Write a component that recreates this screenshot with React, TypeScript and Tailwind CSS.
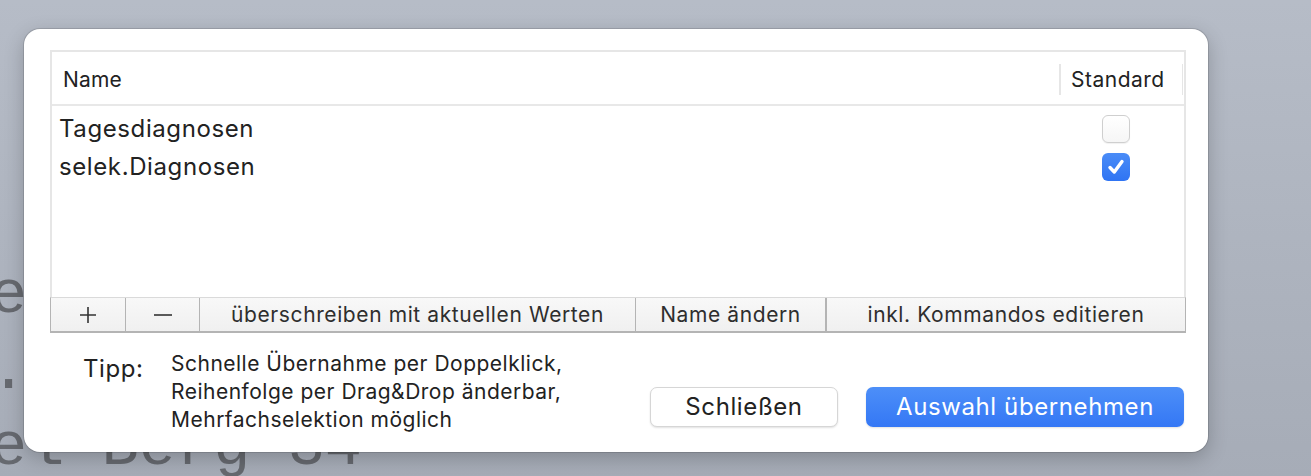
import React from "react";

const font = { fontFamily: "Inter, 'Noto Sans', sans-serif" };

function Checkbox({ checked }: { checked: boolean }) {
  if (checked) {
    return (
      <div className="flex h-[28px] w-[28px] items-center justify-center rounded-[6px] bg-gradient-to-b from-[#4a8cf7] to-[#2f74f3]">
        <svg width="20" height="20" viewBox="0 0 20 20">
          <path d="M4 10.5 L8.3 15 L16 4.5" fill="none" stroke="white" strokeWidth="3.4" strokeLinecap="round" strokeLinejoin="round" />
        </svg>
      </div>
    );
  }
  return (
    <div className="h-[28px] w-[28px] rounded-[6px] border border-[#cfcfcf] bg-gradient-to-b from-white to-[#f6f6f6] shadow-[0_1px_1px_rgba(0,0,0,0.06)]" />
  );
}

export default function App() {
  return (
    <div className="relative h-[476px] w-[1311px] overflow-hidden bg-gradient-to-b from-[#b6bcc7] to-[#a6acb7]" style={font}>
      <div
        className="-ml-[10px] pt-[258px] text-[62px] leading-[76px] text-[#66696f] whitespace-pre"
        style={{ fontFamily: "'Liberation Mono', monospace" }}
      >
        <div>e</div>
        <div>.</div>
        <div>el Berg 34</div>
      </div>

      <div className="absolute left-[24px] top-[29px] flex h-[423px] w-[1184px] flex-col rounded-[16px] bg-white pl-[26px] pr-[22px] pt-[21px] shadow-[0_0_0_1px_rgba(0,0,0,0.12),0_6px_20px_rgba(0,0,0,0.22)]">
        {/* table */}
        <div className="flex h-[283px] shrink-0 flex-col">
          <div className="flex flex-1 flex-col border-2 border-b-0 border-[#e6e6e6]">
            <div className="flex h-[54px] shrink-0 items-center border-b-2 border-[#e8e8e8] pt-[3px] text-[21px] text-[#222]">
              <div className="flex-1 pl-[11px] tracking-[0.2px]">Name</div>
              <div className="h-[31px] w-[2px] bg-[#e6e6e6]" />
              <div className="w-[121px] pl-[10px] tracking-[0.5px]">Standard</div>
              <div className="h-[31px] w-[1px] bg-[#e6e6e6]" />
              <div className="w-[1px]" />
            </div>
            <div className="flex flex-col pt-[4px] text-[24px] tracking-[0.6px] text-[#222]">
              <div className="flex h-[38px] items-center">
                <div className="flex-1 pl-[7px]">Tagesdiagnosen</div>
                <div className="mr-[54px]">
                  <Checkbox checked={false} />
                </div>
              </div>
              <div className="flex h-[38px] items-center">
                <div className="flex-1 pl-[7px]">selek.Diagnosen</div>
                <div className="mr-[54px]">
                  <Checkbox checked={true} />
                </div>
              </div>
            </div>
          </div>
          <div className="flex h-[36px] shrink-0 border border-b-2 border-[#b4b4b4] border-t-[#dadada] bg-gradient-to-b from-[#f8f8f8] to-[#f0f0f0] text-[21px] tracking-[0.6px] text-[#2e2e2e]">
            <div className="flex w-[74px] items-center justify-center">
              <svg width="18" height="18" viewBox="0 0 18 18">
                <path d="M9 1 V17 M1 9 H17" stroke="#333" strokeWidth="1.6" />
              </svg>
            </div>
            <div className="flex w-[74px] items-center justify-center border-l border-[#b4b4b4]">
              <svg width="20" height="18" viewBox="0 0 20 18">
                <path d="M1 9 H19" stroke="#333" strokeWidth="1.6" />
              </svg>
            </div>
            <div className="flex w-[436px] items-center justify-center border-l border-[#b4b4b4]">überschreiben mit aktuellen Werten</div>
            <div className="flex w-[190px] items-center justify-center border-l border-[#b4b4b4]">Name ändern</div>
            <div className="flex flex-1 items-center justify-center border-l-2 border-[#b4b4b4]">inkl. Kommandos editieren</div>
          </div>
        </div>

        {/* bottom */}
        <div className="flex min-h-0 flex-1 items-start pl-[33px] pr-[2px] pt-[17px]">
          <div className="w-[88px] shrink-0 pt-[5px] text-[24px] leading-[28px] tracking-[0.6px] text-[#222]">Tipp:</div>
          <div className="shrink-0 text-[21px] leading-[28px] tracking-[0.5px] text-[#222]">
            <div>Schnelle Übernahme per Doppelklick,</div>
            <div>Reihenfolge per Drag&amp;Drop änderbar,</div>
            <div>Mehrfachselektion möglich</div>
          </div>
          <div className="mb-[25px] ml-auto flex gap-[28px] self-end">
            <div className="flex h-[40px] w-[188px] items-center justify-center rounded-[7px] border border-[#d6d6d6] bg-white text-[24px] tracking-[0.6px] text-[#222] shadow-[0_1px_2px_rgba(0,0,0,0.12)]">
              Schließen
            </div>
            <div className="flex h-[40px] w-[318px] items-center justify-center rounded-[7px] bg-gradient-to-b from-[#4d8ff8] to-[#3477f5] text-[24px] tracking-[0.6px] text-white shadow-[0_1px_2px_rgba(0,0,0,0.12)]">
              Auswahl übernehmen
            </div>
          </div>
        </div>
      </div>
    </div>
  );
}
